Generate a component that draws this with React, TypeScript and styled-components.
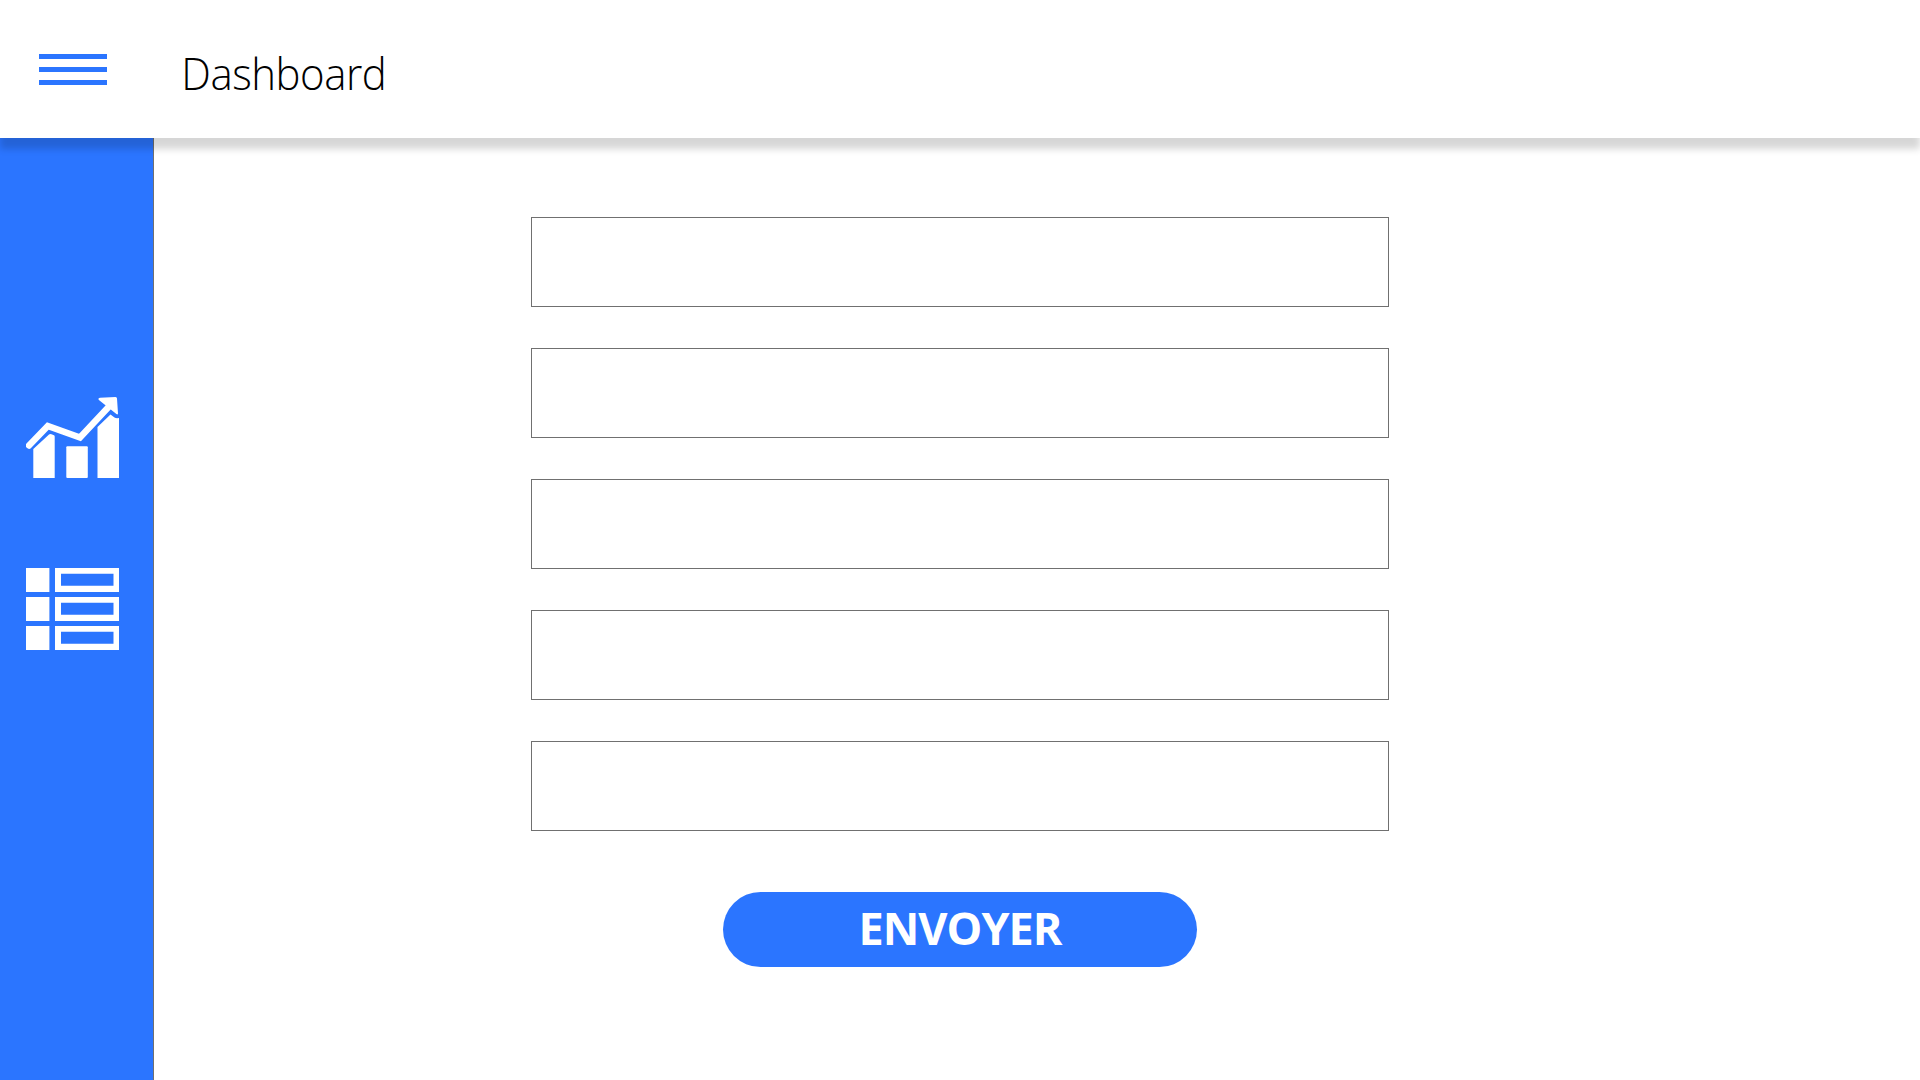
import React from "react";
import styled, { createGlobalStyle } from "styled-components";

const blue = "#2b75ff";

const GlobalStyle = createGlobalStyle`
  body { margin: 0; background: #fff; overflow: hidden; }
  * { box-sizing: border-box; }
`;

const Page = styled.div`
  display: flex;
  flex-direction: column;
  width: 1920px;
  height: 1080px;
  overflow: hidden;
  background: #fff;
  font-family: "Open Sans", "Noto Sans", sans-serif;
`;

const Header = styled.header`
  position: relative;
  z-index: 1;
  flex: none;
  display: flex;
  align-items: flex-start;
  height: 138px;
  padding-left: 39px;
  background: #fff;
  box-shadow: 0 11px 7px rgba(0, 0, 0, 0.16);
`;

const MenuButton = styled.button`
  display: flex;
  flex-direction: column;
  gap: 8px;
  width: 68px;
  margin: 54px 0 0;
  padding: 0;
  border: 0;
  background: none;
`;

const MenuLine = styled.span`
  height: 5px;
  width: 100%;
  background: ${blue};
`;

const Title = styled.h1`
  margin: 41px 0 0 74px;
  font-size: 45px;
  line-height: 64px;
  font-weight: 300;
  letter-spacing: -0.5px;
  color: #000;
  transform: scaleX(0.932);
  transform-origin: 4px 50%;
`;

const Body = styled.div`
  flex: 1;
  display: flex;
`;

const Sidebar = styled.nav`
  flex: none;
  display: flex;
  flex-direction: column;
  gap: 90px;
  width: 154px;
  padding: 258px 0 0 26px;
  border-right: 1px solid #707070;
  background: ${blue};
`;

const Icon = styled.svg`
  display: block;
  width: 93px;
  height: 82px;
  fill: #fff;
`;

const Form = styled.form`
  display: flex;
  flex-direction: column;
  align-items: center;
  width: 858px;
  margin-left: 377px;
  padding-top: 79px;
`;

const Fields = styled.div`
  display: flex;
  flex-direction: column;
  gap: 41px;
  width: 100%;
`;

const Field = styled.input`
  display: block;
  width: 100%;
  height: 90px;
  padding: 0 24px;
  border: 1px solid #707070;
  border-radius: 0;
  background: #fff;
  font: 300 32px "Open Sans", sans-serif;
  outline: none;
`;

const Submit = styled.button`
  width: 474px;
  height: 75px;
  margin-top: 61px;
  padding: 0 0 4px;
  border: 0;
  border-radius: 38px;
  background: ${blue};
  color: #fff;
  font: 700 45px/71px "Open Sans", "Noto Sans", sans-serif;
  letter-spacing: -1px;
`;

const rows = [0, 29, 58];

export default function App() {
  return (
    <Page>
      <GlobalStyle />
      <Header>
        <MenuButton type="button" aria-label="Menu">
          <MenuLine />
          <MenuLine />
          <MenuLine />
        </MenuButton>
        <Title>Dashboard</Title>
      </Header>
      <Body>
        <Sidebar>
          <Icon viewBox="0 0 93 82">
            <path d="M3 49.500 21.800 30 54 41.500 83 10.500" fill="none" stroke="#fff" strokeWidth="6.400" strokeLinecap="round" />
            <path d="M72.500 3.500Q72 2 74 1.800L89.500 1Q91 1 91 2.500L92 17.500Q91.600 19 90.400 18L72.900 4Z" />
            <path d="M7.300 53 23 38.500Q24 37.600 25.500 38.300L28 39.300Q28.700 39.800 28.700 40.500V82H7.300Z" />
            <rect x="40.300" y="50.300" width="21.500" height="31.700" rx="1" />
            <path d="M71.500 31 84.500 18.500 88.500 21.500Q90 22.500 93 22V82H71.500Z" />
          </Icon>
          <Icon viewBox="0 0 93 82">
            {rows.map((y) => (
              <React.Fragment key={y}>
                <rect x="0" y={y} width="23.400" height="24" />
                <path fillRule="evenodd" d={`M29 ${y}H93v24H29ZM35 ${y + 5.700}v12h52.500v-12Z`} />
              </React.Fragment>
            ))}
          </Icon>
        </Sidebar>
        <Form>
          <Fields>
            {[1, 2, 3, 4, 5].map((n) => (
              <Field key={n} aria-label={`Champ ${n}`} />
            ))}
          </Fields>
          <Submit type="button">ENVOYER</Submit>
        </Form>
      </Body>
    </Page>
  );
}
